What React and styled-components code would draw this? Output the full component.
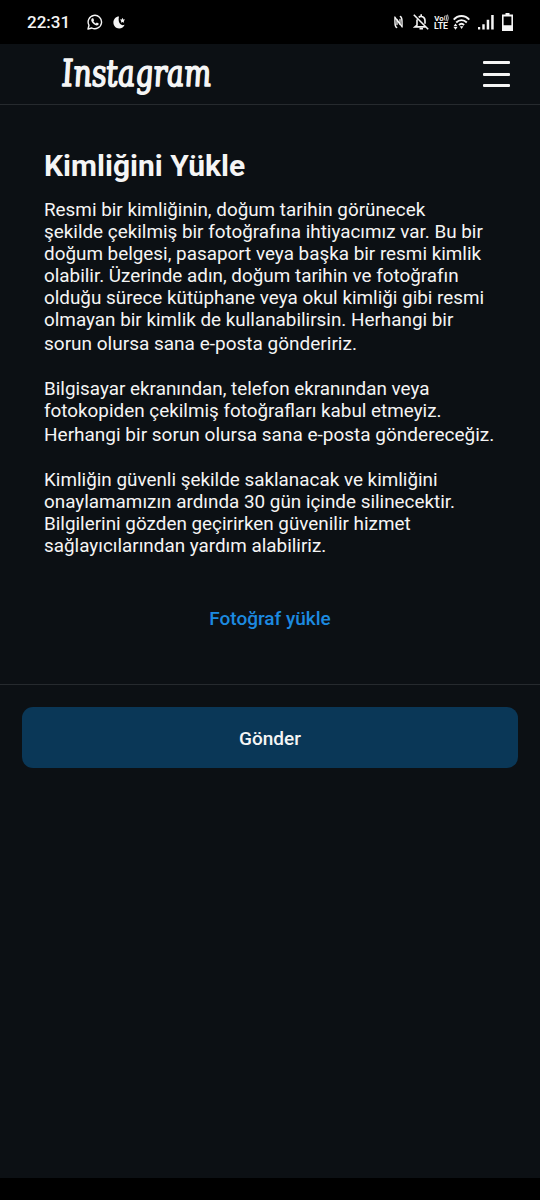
import React from 'react'
import styled, { createGlobalStyle } from 'styled-components'

const GlobalStyle = createGlobalStyle`
  body {
    margin: 0;
    background: #0c1014;
    color: #f5f5f5;
    font-family: Roboto, sans-serif;
  }
`

const Screen = styled.div`
  display: flex;
  flex-direction: column;
  height: 1200px;
  width: 540px;
  overflow: hidden;
`

const StatusBar = styled.div`
  display: flex;
  align-items: center;
  justify-content: space-between;
  flex: none;
  box-sizing: border-box;
  height: 44px;
  padding: 0 27px;
  background: #000;
`

const StatusGroup = styled.div`
  display: flex;
  align-items: center;

  svg {
    display: block;
  }
`

const Clock = styled.span`
  width: 58px;
  font-size: 17px;
  font-weight: 500;
  line-height: 46px;
  white-space: nowrap;
`

const IconSlot = styled.span`
  margin-left: ${({ $gap }) => $gap}px;
`

const Header = styled.header`
  display: flex;
  align-items: center;
  justify-content: space-between;
  flex: none;
  box-sizing: border-box;
  height: 61px;
  padding: 0 30px 0 61px;
  border-bottom: 1px solid #262a2e;
`

const Wordmark = styled.svg`
  display: block;
  overflow: visible;

  text {
    font-family: 'DejaVu Serif Condensed', 'DejaVu Serif', serif;
    font-style: italic;
    font-size: 37px;
    fill: #f5f5f5;
    stroke: #f5f5f5;
    stroke-width: 1.6px;
    stroke-linejoin: round;
  }
`

const MenuButton = styled.button`
  display: flex;
  flex-direction: column;
  justify-content: space-between;
  width: 27px;
  height: 26px;
  padding: 0;
  border: 0;
  background: none;
`

const MenuLine = styled.span`
  height: 3px;
  border-radius: 1px;
  background: #f5f5f5;
`

const Content = styled.main`
  display: flex;
  flex-direction: column;
  flex: none;
  box-sizing: border-box;
  height: 580px;
  padding: 43px 44px 0;
  border-bottom: 1px solid #262a2e;
`

const Title = styled.h1`
  margin: 0 0 15px;
  font-size: 30px;
  font-weight: 700;
  line-height: 36px;
`

const Paragraph = styled.p`
  margin: 0 0 23px;
  font-size: 18.86px;
  line-height: 22px;
  white-space: nowrap;
`

const Closing = styled.span`
  display: block;
  padding-top: 2px;
  font-size: 19px;
`

const UploadLink = styled.button`
  align-self: center;
  margin-top: 27px;
  padding: 0;
  border: 0;
  background: none;
  color: #1c8ae0;
  font: 500 19px/24px Roboto, sans-serif;
`

const Footer = styled.footer`
  flex: 1;
  padding: 22px 22px 0;
`

const SubmitButton = styled.button`
  display: block;
  width: 100%;
  height: 61px;
  padding: 2px 0 0;
  border: 0;
  border-radius: 11px;
  background: #0a3757;
  color: #f5f5f5;
  font: 500 19px/24px Roboto, sans-serif;
`

const NavigationBar = styled.div`
  flex: none;
  height: 22px;
  background: #000;
`

const WhatsAppIcon = () => (
  <svg width="16" height="16" viewBox="0 0 16 16" fill="none">
    <path
      d="M1 15l1-3.7A6.7 6.7 0 1 1 4.8 14z"
      stroke="#f5f5f5"
      strokeWidth="1.4"
      strokeLinejoin="round"
    />
    <path
      d="M5.4 4.3h.8l.9 1.9-.7 1c.6 1.1 1.3 1.8 2.5 2.3l.9-1 1.9.9c.1 1.3-.8 2-2 2C7.3 11.2 4.5 8.5 4.2 6.3c0-.8.5-1.6 1.2-2z"
      fill="#f5f5f5"
    />
  </svg>
)

const MoonIcon = () => (
  <svg width="13" height="13" viewBox="0 0 13 13" fill="#f5f5f5">
    <path d="M6 .6C2.8.6.4 3.3.4 6.6s2.5 5.9 5.7 5.9c2.7 0 4.7-1.5 5.5-3.7C8.7 10 6.500 8.300 5.800 5.300 5.500 3.500 5.600 1.900 6 .6z" />
    <path d="M9.5 1.8l.8 1.6 1.8.2-1.3 1.3.3 1.8-1.6-.8-1.6.8.3-1.8-1.3-1.3 1.8-.2z" />
  </svg>
)

const NfcIcon = () => (
  <svg
    width="9"
    height="14"
    viewBox="0 0 9 14"
    fill="none"
    stroke="#f5f5f5"
    strokeWidth="1.3"
    strokeLinecap="round"
    strokeLinejoin="round"
  >
    <path d="M2.700 12.500C.8 12 .9 9.500.9 2L6 9.500V4.500" />
    <path d="M6.300 1.500C8.200 2 8.100 4.500 8.100 12L3 4.500v5" />
  </svg>
)

const BellOffIcon = () => (
  <svg
    width="16"
    height="16"
    viewBox="0 0 16 16"
    fill="none"
    stroke="#f5f5f5"
    strokeWidth="1.6"
  >
    <path d="M.8.8l14.400 14.400M4 5.500v5.700L2 12.900h11M5.800 3.400C7.500 1.500 12 2.500 12 6.700v3M8.200.3v2" />
    <path d="M6.500 14.700h3.500" />
  </svg>
)

const VolteIcon = () => (
  <svg width="15" height="16" viewBox="0 0 15 16" fill="#f5f5f5">
    <text
      x="0.3"
      y="7.2"
      fontSize="8"
      fontWeight="700"
      fontFamily="Roboto"
      textLength="9.5"
      lengthAdjust="spacingAndGlyphs"
    >
      Vo
    </text>
    <path
      d="M10.700 1.800v4.500M12 1q1.200 2.800 0 6M13.500.6q1.500 3.400 0 6.800"
      stroke="#f5f5f5"
      strokeWidth=".8"
      fill="none"
    />
    <text
      x="0"
      y="15.3"
      fontSize="9"
      fontWeight="700"
      fontFamily="Roboto"
      textLength="14"
      lengthAdjust="spacingAndGlyphs"
    >
      LTE
    </text>
  </svg>
)

const WifiIcon = () => (
  <svg width="17" height="15" viewBox="0 0 17 15" fill="none">
    <path
      d="M.7 4.700C5-.3 12-.2 16.300 4.700M3.200 7.500c3.200-3.200 7.400-3.200 10.600 0M6 10c1.500-1.500 3.500-1.500 5.100 0"
      stroke="#f5f5f5"
      strokeWidth="1.9"
    />
    <path
      d="M6.800 11.300h3.600l-1.800 2.600zM.5 11.200h4L2.500 8.600zM.5 12.100h4l-2 2.700z"
      fill="#f5f5f5"
    />
  </svg>
)

const SignalIcon = () => (
  <svg width="16" height="15" viewBox="0 0 16 15" fill="#f5f5f5">
    <path d="M0 12h2.200v2.500H0zM4.300 9.200h2.400v5.300H4.300zM8.700 4.800h2.500v9.700H8.700zM13.200 0h2.500v14.500h-2.500z" />
  </svg>
)

const BatteryIcon = () => (
  <svg width="11" height="18" viewBox="0 0 11 18">
    <path
      d="M3.500 0h4v1.500H11V18H0V1.500h3.500zM1.600 3.500v8.700h7.800V3.500z"
      fill="#f5f5f5"
      fillRule="evenodd"
    />
  </svg>
)

export default function App() {
  return (
    <Screen>
      <GlobalStyle />
      <StatusBar>
        <StatusGroup>
          <Clock>22:31</Clock>
          <IconSlot $gap={2}>
            <WhatsAppIcon />
          </IconSlot>
          <IconSlot $gap={10}>
            <MoonIcon />
          </IconSlot>
        </StatusGroup>
        <StatusGroup>
          <NfcIcon />
          <IconSlot $gap={10}>
            <BellOffIcon />
          </IconSlot>
          <IconSlot $gap={5}>
            <VolteIcon />
          </IconSlot>
          <IconSlot $gap={3.5}>
            <WifiIcon />
          </IconSlot>
          <IconSlot $gap={8.5}>
            <SignalIcon />
          </IconSlot>
          <IconSlot $gap={8}>
            <BatteryIcon />
          </IconSlot>
        </StatusGroup>
      </StatusBar>

      <Header>
        <Wordmark width="152" height="44" role="img" aria-label="Instagram">
          <text
            x="0"
            y="0"
            transform="translate(2 34) skewX(5)"
            textLength="149"
            lengthAdjust="spacingAndGlyphs"
          >
            Instagram
          </text>
        </Wordmark>
        <MenuButton aria-label="Menü">
          <MenuLine />
          <MenuLine />
          <MenuLine />
        </MenuButton>
      </Header>

      <Content>
        <Title>Kimliğini Yükle</Title>
        <Paragraph>
          Resmi bir kimliğinin, doğum tarihin görünecek
          <br />
          şekilde çekilmiş bir fotoğrafına ihtiyacımız var. Bu bir
          <br />
          doğum belgesi, pasaport veya başka bir resmi kimlik
          <br />
          olabilir. Üzerinde adın, doğum tarihin ve fotoğrafın
          <br />
          olduğu sürece kütüphane veya okul kimliği gibi resmi
          <br />
          olmayan bir kimlik de kullanabilirsin. Herhangi bir
          <Closing>sorun olursa sana e-posta göndeririz.</Closing>
        </Paragraph>
        <Paragraph>
          Bilgisayar ekranından, telefon ekranından veya
          <br />
          fotokopiden çekilmiş fotoğrafları kabul etmeyiz.
          <Closing>Herhangi bir sorun olursa sana e-posta göndereceğiz.</Closing>
        </Paragraph>
        <Paragraph>
          Kimliğin güvenli şekilde saklanacak ve kimliğini
          <br />
          onaylamamızın ardında 30 gün içinde silinecektir.
          <br />
          Bilgilerini gözden geçirirken güvenilir hizmet
          <br />
          sağlayıcılarından yardım alabiliriz.
        </Paragraph>
        <UploadLink>Fotoğraf yükle</UploadLink>
      </Content>

      <Footer>
        <SubmitButton>Gönder</SubmitButton>
      </Footer>
      <NavigationBar />
    </Screen>
  )
}
